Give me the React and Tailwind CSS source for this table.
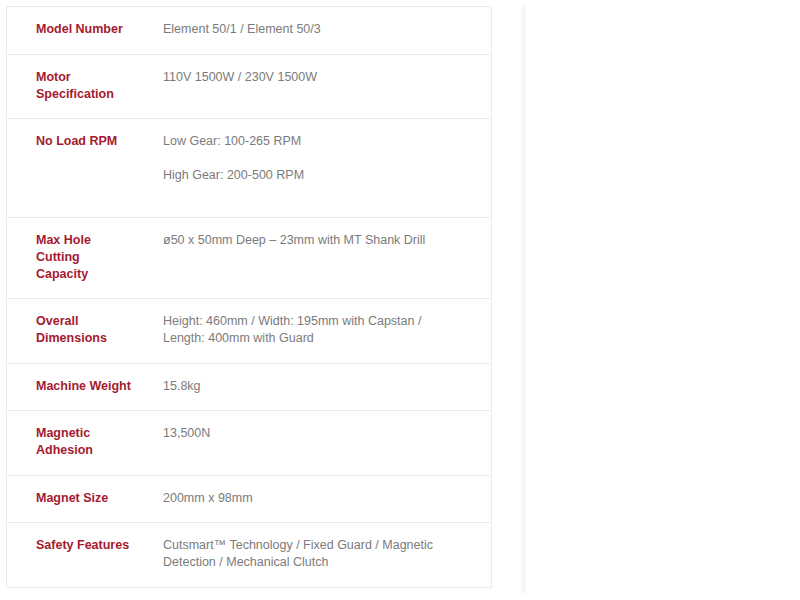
import React from 'react';

const specs = [
  { label: 'Model Number', value: ['Element 50/1 / Element 50/3'] },
  { label: 'Motor Specification', value: ['110V 1500W / 230V 1500W'] },
  { label: 'No Load RPM', value: ['Low Gear: 100-265 RPM', 'High Gear: 200-500 RPM'] },
  { label: 'Max Hole Cutting Capacity', value: ['ø50 x 50mm Deep – 23mm with MT Shank Drill'] },
  { label: 'Overall Dimensions', value: ['Height: 460mm / Width: 195mm with Capstan / Length: 400mm with Guard'] },
  { label: 'Machine Weight', value: ['15.8kg'] },
  { label: 'Magnetic Adhesion', value: ['13,500N'] },
  { label: 'Magnet Size', value: ['200mm x 98mm'] },
  { label: 'Safety Features', value: ['Cutsmart™ Technology / Fixed Guard / Magnetic Detection / Mechanical Clutch'] },
];

const SpecRow = ({ label, value, last }) => (
  <div className={`grid grid-cols-[156px_1fr] ${last ? '' : 'border-b border-[#ebebeb]'}`}>
    <div className="pl-[29px] pr-[30px] pt-[14px] pb-[15.5px] font-bold text-[#a51a2f]">{label}</div>
    <div className="pr-[30px] pt-[14px] pb-[15.5px] text-[#7b7b7b]">
      {value.length > 1
        ? value.map((line, i) => (
            <p key={i} className="mb-[17px]">{line}</p>
          ))
        : value[0]}
    </div>
  </div>
);

export default function App() {
  return (
    <div className="flex bg-white min-h-[600px] pl-[6px] pt-[6px] font-['Liberation_Sans',Arial,sans-serif] text-[12.5px] leading-[17px]">
      {/* tableau des caractéristiques */}
      <div className="w-[486px] self-start border border-[#ebebeb]">
        {specs.map((spec, i) => (
          <SpecRow key={spec.label} {...spec} last={i === specs.length - 1} />
        ))}
      </div>
      <div className="ml-[29px] -mt-[1px] w-[5px] h-[588px] bg-[#f7f7f7]"></div>
    </div>
  );
}
